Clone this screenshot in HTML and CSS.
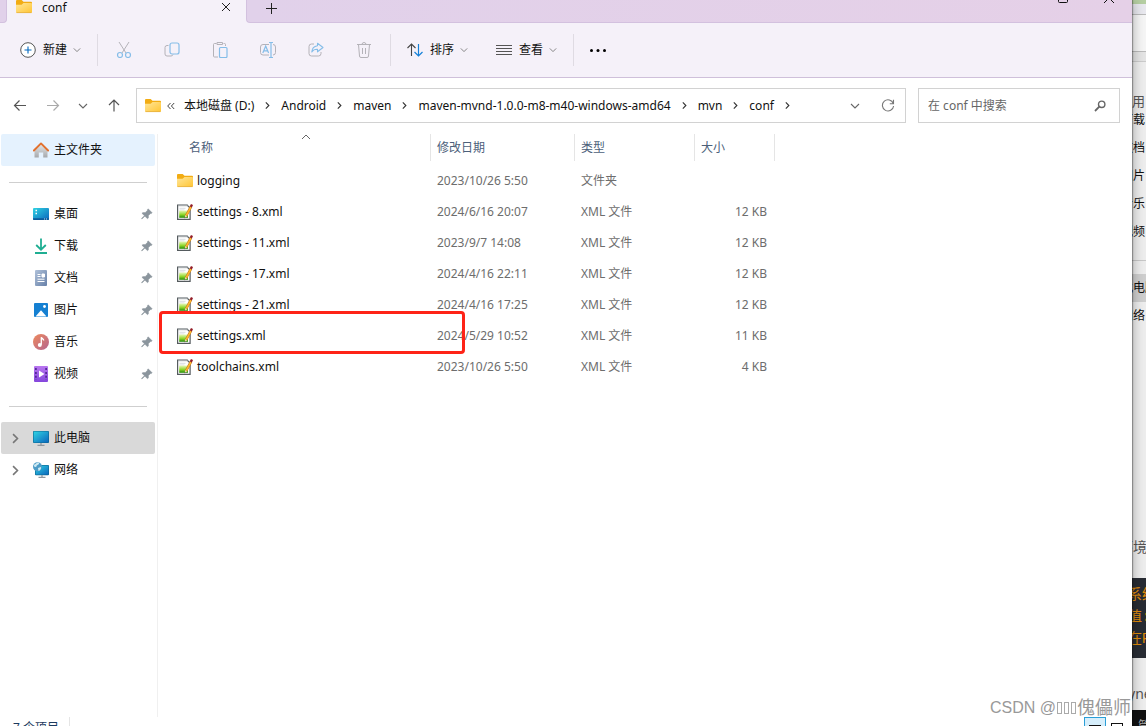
FILE: index.html
```html
<!DOCTYPE html>
<html lang="zh-CN">
<head>
<meta charset="utf-8">
<title>conf</title>
<link rel="stylesheet" href="styles.css">
</head>
<body>
<svg class="defs" aria-hidden="true">
  <defs>
    <linearGradient id="g-folder" x1="0" y1="0" x2="1" y2="1"><stop offset="0" stop-color="#ffe69a"/><stop offset="1" stop-color="#ffc533"/></linearGradient>
    <linearGradient id="g-screen" x1="0" y1="0" x2="1" y2="1"><stop offset="0" stop-color="#2fd3e2"/><stop offset="1" stop-color="#0c66bd"/></linearGradient>
    <linearGradient id="g-music" x1="0" y1="0" x2="1" y2="1"><stop offset="0" stop-color="#ee8a5d"/><stop offset="1" stop-color="#b4648f"/></linearGradient>
    <linearGradient id="g-doc" x1="0" y1="0" x2="1" y2="1"><stop offset="0" stop-color="#b0c1d9"/><stop offset="1" stop-color="#6680a8"/></linearGradient>
    <linearGradient id="g-video" x1="0" y1="0" x2="0" y2="1"><stop offset="0" stop-color="#b976f0"/><stop offset="1" stop-color="#8446dc"/></linearGradient>
    <linearGradient id="g-green" x1="0" y1="0" x2="0" y2="1"><stop offset="0" stop-color="#e9f8b8"/><stop offset=".55" stop-color="#8ed62c"/><stop offset="1" stop-color="#218a06"/></linearGradient>
    <linearGradient id="g-wall" x1="0" y1="0" x2="0" y2="1"><stop offset="0" stop-color="#e8e9ea"/><stop offset="1" stop-color="#a6a9ac"/></linearGradient>
    <symbol id="folder" viewBox="0 0 16 16">
      <path d="M0 2a1 1 0 0 1 1-1h4.700l1.800 1.700H15a1 1 0 0 1 1 1V8H0z" fill="#f2ac13"/>
      <path d="M0 5.700h5.600L7.500 4H15a1 1 0 0 1 1 1V13a1 1 0 0 1-1 1H1a1 1 0 0 1-1-1z" fill="url(#g-folder)"/>
      <path d="M.5 13.600h15" stroke="#e6b040" stroke-width=".8"/>
    </symbol>
    <symbol id="xml" viewBox="0 0 16 16">
      <path d="M.600 1h9.500l3 3v11.300H.600z" fill="#fff" stroke="#555b5e" stroke-width="1.200"/>
      <path d="M2 0v2.400M4 0v2.400M6 0v2.400M8 0v2.400M10 0v2.400" stroke="#a5abae"/>
      <path d="M2.500 4.300h6M2.500 6h5" stroke="#c9cfd2" stroke-width=".7"/>
      <path d="M2.200 6.500h8.800v7.300H2.200z" fill="url(#g-green)"/>
      <path d="M14 2.600 9 12" stroke="#b5701a" stroke-width="2.600"/>
      <path d="M13.900 3 9.300 11.500" stroke="#ffb62e" stroke-width="1.600"/>
      <path d="m8 11.100 2.200 1.200-2.400 2z" fill="#efd5a0"/><path d="m7.800 13.100.9.500-1 .9z" fill="#222"/>
      <path d="m14 0 2 1.100-1.100 2.300-2.200-1.200z" fill="#931d28"/>
    </symbol>
    <symbol id="home" viewBox="0 0 16 16">
      <path d="M1.500 7.500 8 1.500l6.500 6V15.500h-4.300v-5H5.800v5H1.500z" fill="url(#g-wall)"/>
      <path d="M.9 8.500 8 1.400l7.100 7.100" fill="none" stroke="#e2702d" stroke-width="1.900" stroke-linecap="round" stroke-linejoin="round"/>
    </symbol>
    <symbol id="desktop" viewBox="0 0 16 16">
      <rect y="2" width="16" height="12" rx="1" fill="url(#g-screen)"/>
      <path d="M2.500 4.500H4M2.500 7.500H4" stroke="#fff" stroke-width="1.300"/>
      <path d="M0 12.200h16V13a1 1 0 0 1-1 1H1a1 1 0 0 1-1-1z" fill="#0b5a9c"/><path d="M11 13h1m1 0h1" stroke="#fff" stroke-width=".8"/>
    </symbol>
    <symbol id="download" viewBox="0 0 16 16">
      <path d="M8 .5v11M3.200 7 8 11.700 12.800 7M2 15h12" fill="none" stroke="#1fae92" stroke-width="1.800"/>
    </symbol>
    <symbol id="document" viewBox="0 0 16 16">
      <rect x="2" width="12" height="16" rx="1" fill="url(#g-doc)"/>
      <path d="M4.500 4.500h3M4.500 6.500h3M4.500 9.200h7M4.500 11.500h7M9 4h2.500v3H9z" stroke="#fff" fill="#fff" stroke-width="1"/>
    </symbol>
    <symbol id="picture" viewBox="0 0 16 16">
      <rect x="1" y="1" width="14" height="14" rx="1" fill="#1580d2"/>
      <path d="M2.500 14.500 8 8.200l5.500 6.300z" fill="#fff"/><circle cx="11.500" cy="4.500" r="1.400" fill="#fff"/>
    </symbol>
    <symbol id="music" viewBox="0 0 16 16">
      <circle cx="8" cy="8" r="8" fill="url(#g-music)"/>
      <path d="M8.300 10.800V3.300c.5 1.400 2.400 1.500 2.400 3.300" fill="none" stroke="#fff" stroke-width="1.300"/><circle cx="6.800" cy="11" r="2" fill="#fff"/>
    </symbol>
    <symbol id="video" viewBox="0 0 16 16">
      <rect x="1" width="14" height="16" rx="1" fill="url(#g-video)"/>
      <path d="M2.900 2v12M13.100 2v12" stroke="#4d2490" stroke-width="1.600" stroke-dasharray="2 1.900"/>
      <path d="M6 4.500v7L11.500 8z" fill="#fff"/>
    </symbol>
    <symbol id="computer" viewBox="0 0 16 16">
      <rect y="1" width="16" height="12" rx="1" fill="#0b6791"/><rect x=".6" y="1.600" width="14.800" height="10.800" rx=".5" fill="url(#g-screen)"/>
      <path d="M8 13v2M4.500 15.300h7" stroke="#8f979e" stroke-width="1.300"/>
    </symbol>
    <symbol id="network" viewBox="0 0 16 16">
      <rect x="2" y="3" width="14" height="10.200" rx="1" fill="#0b6791"/><rect x="2.600" y="3.600" width="12.800" height="9" fill="url(#g-screen)"/>
      <path d="M9 13v2M5.500 15.400h7" stroke="#8f979e" stroke-width="1.300"/>
      <circle cx="4.500" cy="4.800" r="4.500" fill="#4e9cc7"/><path d="M1 2.800c2-.4 2-2 4-2.300 2 .5 1 2-.5 2.400s-.5 2-2 2S1 4.500 1 2.800zM5 6l3-1c.5 1.800-1 3.700-2.500 4z" fill="#cfeaf2"/>
    </symbol>
    <symbol id="pin" viewBox="0 0 12 12">
      <path d="M7.200.8 11.200 4.800 10.400 5.600 9.700 5.400 7.500 7.600 7.400 10 6.500 10.800 3.900 8.200 1.300 10.700.6 10.900.8 10.100 3.400 7.700.9 5.300 1.900 4.500 4.300 4.500 6.500 2.300 6.400 1.600z" fill="#8b959d" stroke="#8b959d" stroke-width=".4"/>
    </symbol>
    <symbol id="right" viewBox="0 0 8 8"><path d="m2.500 1.300 2.700 2.700-2.700 2.700" fill="none" stroke="currentColor"/></symbol>
    <symbol id="down" viewBox="0 0 10 10"><path d="m1 3 4 4 4-4" fill="none" stroke="currentColor" stroke-width="1.100"/></symbol>
  </defs>
</svg>

<div class="screen">
  <main class="window">
    <header class="tabs">
      <div class="tab-prev"></div>
      <div class="tab">
        <svg class="icon"><use href="#folder"/></svg>
        <span class="tab-name">conf</span>
        <button class="tab-close" aria-label="关闭标签页"><svg viewBox="0 0 10 10" width="10" height="10"><path d="m1 1 8 8M9 1 1 9" stroke="#222" fill="none"/></svg></button>
      </div>
      <div class="tab-rest">
        <button aria-label="新建标签页"><svg viewBox="0 0 12 12" width="12" height="12"><path d="M6.500 1v11M1 6.500h11" stroke="#222" fill="none"/></svg></button>
        <div class="caption">
          <button aria-label="最大化"><svg viewBox="0 0 10 10" width="10" height="10"><rect x=".5" y=".5" width="9" height="9" rx="1" fill="none" stroke="#111"/></svg></button>
          <button aria-label="关闭"><svg viewBox="0 0 10 10" width="10" height="10"><path d="m0 0 10 10M10 0 0 10" stroke="#111" fill="none"/></svg></button>
        </div>
      </div>
    </header>

    <div class="toolbar">
      <button class="cmd"><svg class="icon" viewBox="0 0 16 16"><circle cx="8" cy="8" r="7.300" fill="#fff" stroke="#555"/><path d="M8 4.500v7M4.500 8h7" stroke="#0067c0" stroke-width="1.100"/></svg>新建<svg class="chev"><use href="#down"/></svg></button>
      <i class="sep"></i>
      <div class="tools">
        <button aria-label="剪切"><svg class="icon" viewBox="0 0 16 16" fill="none"><path d="M3 0l7 11M13 0 6 11" stroke="#b4b2b8"/><circle cx="4" cy="13" r="2.500" stroke="#85bde8" stroke-width="1.200"/><circle cx="12" cy="13" r="2.500" stroke="#85bde8" stroke-width="1.200"/></svg></button>
        <button aria-label="复制"><svg class="icon" viewBox="0 0 16 16" fill="none"><path d="M4.500 3.500H3a2 2 0 0 0-2 2V12a2 2 0 0 0 2 2h4a2 2 0 0 0 2-1.500" stroke="#b4b2b8"/><rect x="6" y="1" width="9" height="11" rx="2" stroke="#85bde8" stroke-width="1.200"/></svg></button>
        <button aria-label="粘贴"><svg class="icon" viewBox="0 0 16 16" fill="none"><path d="M4.500 1.500H2.500a1 1 0 0 0-1 1V14a1 1 0 0 0 1 1H6M11.500 1.500h1a1 1 0 0 1 1 1V4M5 .5h5.500v2H5z" stroke="#b4b2b8"/><rect x="7.500" y="5.500" width="7.500" height="10" rx="1" stroke="#85bde8" stroke-width="1.200"/></svg></button>
        <button aria-label="重命名"><svg class="icon" viewBox="0 0 16 16" fill="none"><path d="M9 2.500H3a2.500 2.500 0 0 0-2.500 2.500v5.500A2.500 2.500 0 0 0 3 13h6M13 2.500a2.500 2.500 0 0 1 2.500 2.500v5.500A2.500 2.500 0 0 1 13 13" stroke="#b4b2b8"/><path d="M11 .5v15M9 .5h4M9 15.500h4M2.800 11l2.900-7 2.900 7M3.800 8.800h3.800" stroke="#85bde8" stroke-width="1.200"/></svg></button>
        <button aria-label="共享"><svg class="icon" viewBox="0 0 16 16" fill="none"><path d="M6 2H3.500A2.500 2.500 0 0 0 1 4.500v7A2.500 2.500 0 0 0 3.500 14h7a2.500 2.500 0 0 0 2.500-2.500V10" stroke="#b4b2b8"/><path d="M9.500 1.200 15 5.500l-5.500 4.300V7.300C6.500 7.200 5 8 3.800 10c.2-3.500 2.200-5.800 5.700-6.300z" stroke="#85bde8" stroke-linejoin="round" stroke-width="1.100"/></svg></button>
        <button aria-label="删除"><svg class="icon" viewBox="0 0 16 16" fill="none"><path d="M1 2.500h14M2.500 2.500l1 11.500a1.500 1.500 0 0 0 1.500 1.500h6a1.500 1.500 0 0 0 1.500-1.500l1-11.500M6 2.500a2 2 0 0 1 4 0M6.500 6v6M9.500 6v6" stroke="#b4b2b8"/></svg></button>
      </div>
      <i class="sep"></i>
      <button class="cmd"><svg class="icon" viewBox="0 0 16 16" fill="none"><path d="M4.500 14V2M.5 6l4-4 4 4" stroke="#444" stroke-width="1.100"/><path d="M11.500 2v12M7.500 10l4 4 4-4" stroke="#1480d8" stroke-width="1.200"/></svg>排序<svg class="chev"><use href="#down"/></svg></button>
      <button class="cmd view"><svg class="icon" viewBox="0 0 16 16"><path d="M0 3.500h16M0 6.500h16M0 9.500h16M0 12.500h16" stroke="#555"/></svg>查看<svg class="chev"><use href="#down"/></svg></button>
      <i class="sep"></i>
      <button class="more" aria-label="更多"><svg class="icon" viewBox="0 0 16 16"><circle cx="1.500" cy="8.500" r="1.500"/><circle cx="8" cy="8.500" r="1.500"/><circle cx="14.500" cy="8.500" r="1.500"/></svg></button>
    </div>

    <div class="nav">
      <div class="nav-buttons">
        <button aria-label="后退"><svg viewBox="0 0 14 14" width="14" height="14"><path d="M13 6.500H1.500M6.500 1.500l-5 5 5 5" fill="none" stroke="#555" stroke-width="1.200"/></svg></button>
        <button aria-label="前进"><svg viewBox="0 0 14 14" width="14" height="14"><path d="M1 6.500h11.500M7.500 1.500l5 5-5 5" fill="none" stroke="#aaa" stroke-width="1.200"/></svg></button>
        <button aria-label="最近"><svg class="chev"><use href="#down"/></svg></button>
        <button aria-label="向上"><svg viewBox="0 0 14 14" width="14" height="14"><path d="M7 12.500V1M2 6l5-5 5 5" fill="none" stroke="#555" stroke-width="1.200"/></svg></button>
      </div>
      <div class="address">
        <svg class="icon"><use href="#folder"/></svg>
        <svg class="back-more" viewBox="0 0 8 8"><path d="M3.500 1 .7 4l2.800 3M7.200 1 4.400 4l2.800 3" fill="none" stroke="#444"/></svg>
        <ol class="crumbs">
          <li>本地磁盘 (D:)<svg><use href="#right"/></svg></li>
          <li>Android<svg><use href="#right"/></svg></li>
          <li>maven<svg><use href="#right"/></svg></li>
          <li>maven-mvnd-1.0.0-m8-m40-windows-amd64<svg><use href="#right"/></svg></li>
          <li>mvn<svg><use href="#right"/></svg></li>
          <li>conf<svg><use href="#right"/></svg></li>
        </ol>
        <button aria-label="历史"><svg class="chev"><use href="#down"/></svg></button>
        <button class="refresh" aria-label="刷新"><svg viewBox="0 0 14 14" width="14" height="14"><path d="M12.300 4.500A5.600 5.600 0 1 0 12.600 7M12.500.8v4H8.800" fill="none" stroke="#777" stroke-width="1.100"/></svg></button>
      </div>
      <label class="search">
        <input type="text" placeholder="在 conf 中搜索" aria-label="在 conf 中搜索">
        <svg viewBox="0 0 12 12" width="12" height="12"><circle cx="7.700" cy="4.300" r="3.200" fill="none" stroke="#666" stroke-width="1.400"/><path d="M5.300 6.700 1 11" stroke="#666" stroke-width="1.800"/></svg>
      </label>
    </div>

    <div class="content">
      <nav class="sidebar">
        <a class="place home" href="#"><i class="expand"></i><svg class="icon"><use href="#home"/></svg><span>主文件夹</span></a>
        <hr>
        <a class="place" href="#"><i class="expand"></i><svg class="icon"><use href="#desktop"/></svg><span>桌面</span><svg class="pin"><use href="#pin"/></svg></a>
        <a class="place" href="#"><i class="expand"></i><svg class="icon"><use href="#download"/></svg><span>下载</span><svg class="pin"><use href="#pin"/></svg></a>
        <a class="place" href="#"><i class="expand"></i><svg class="icon"><use href="#document"/></svg><span>文档</span><svg class="pin"><use href="#pin"/></svg></a>
        <a class="place" href="#"><i class="expand"></i><svg class="icon"><use href="#picture"/></svg><span>图片</span><svg class="pin"><use href="#pin"/></svg></a>
        <a class="place" href="#"><i class="expand"></i><svg class="icon"><use href="#music"/></svg><span>音乐</span><svg class="pin"><use href="#pin"/></svg></a>
        <a class="place" href="#"><i class="expand"></i><svg class="icon"><use href="#video"/></svg><span>视频</span><svg class="pin"><use href="#pin"/></svg></a>
        <hr>
        <a class="place current" href="#"><i class="expand"><svg><use href="#right"/></svg></i><svg class="icon"><use href="#computer"/></svg><span>此电脑</span></a>
        <a class="place" href="#"><i class="expand"><svg><use href="#right"/></svg></i><svg class="icon"><use href="#network"/></svg><span>网络</span></a>
      </nav>

      <section class="files">
        <table>
          <thead>
            <tr>
              <th class="name"><div>名称<svg class="sort" viewBox="0 0 10 6"><path d="m1 5 4-4 4 4" fill="none" stroke="#666"/></svg></div></th>
              <th class="date"><div>修改日期</div></th>
              <th class="type"><div>类型</div></th>
              <th class="size"><div>大小</div></th>
            </tr>
          </thead>
          <tbody>
            <tr><td><svg class="icon"><use href="#folder"/></svg><span>logging</span></td><td>2023/10/26 5:50</td><td>文件夹</td><td></td></tr>
            <tr><td><svg class="icon"><use href="#xml"/></svg><span>settings - 8.xml</span></td><td>2024/6/16 20:07</td><td>XML 文件</td><td>12 KB</td></tr>
            <tr><td><svg class="icon"><use href="#xml"/></svg><span>settings - 11.xml</span></td><td>2023/9/7 14:08</td><td>XML 文件</td><td>12 KB</td></tr>
            <tr><td><svg class="icon"><use href="#xml"/></svg><span>settings - 17.xml</span></td><td>2024/4/16 22:11</td><td>XML 文件</td><td>12 KB</td></tr>
            <tr><td><svg class="icon"><use href="#xml"/></svg><span>settings - 21.xml</span></td><td>2024/4/16 17:25</td><td>XML 文件</td><td>12 KB</td></tr>
            <tr><td><svg class="icon"><use href="#xml"/></svg><span>settings.xml</span></td><td>2024/5/29 10:52</td><td>XML 文件</td><td>11 KB</td></tr>
            <tr><td><svg class="icon"><use href="#xml"/></svg><span>toolchains.xml</span></td><td>2023/10/26 5:50</td><td>XML 文件</td><td>4 KB</td></tr>
          </tbody>
        </table>
        <div class="highlight"></div>
      </section>
    </div>

    <footer class="status">
      <span>7 个项目</span>
      <div class="views">
        <button class="on" aria-label="详细信息"><svg viewBox="0 0 12 12" width="12" height="12"><path d="M0 3.500h12M0 6.500h12" stroke="#111"/></svg></button>
        <button aria-label="大图标"><svg viewBox="0 0 12 12" width="12" height="12"><rect x=".5" y="1.500" width="11" height="9" fill="#fff" stroke="#111"/></svg></button>
      </div>
    </footer>
  </main>

  <aside class="behind">
    <div class="b-top"></div>
    <div class="b-bar"></div>
    <div class="b-line"></div>
    <div class="b-label"><span>使用</span></div>
    <ul class="b-list">
      <li>下载</li><li>文档</li><li>图片</li><li>音乐</li><li>视频</li>
    </ul>
    <ul class="b-list b-devices">
      <li class="b-current">此电脑</li><li>网络</li>
    </ul>
    <div class="b-word"><span>环境</span></div>
    <pre class="b-code">系统
值:
在P</pre>
    <div class="b-word b-last"><span>yne</span></div>
    <div class="b-black"><span>管</span></div>
  </aside>
  <div class="watermark">CSDN @<i></i><i></i><i></i><span>傀儡师</span></div>
</div>
</body>
</html>
```
FILE: styles.css
```css
* { box-sizing: border-box; }
body { margin: 0; font: 12px/16px "Noto Sans", "Noto Sans CJK SC", sans-serif; color: #111; }
button { border: 0; padding: 0; background: none; font: inherit; color: inherit; display: flex; align-items: center; justify-content: center; }
svg { display: block; flex: none; }
a { color: inherit; text-decoration: none; }
ul, ol { list-style: none; margin: 0; padding: 0; }
.defs { position: absolute; width: 0; height: 0; }
.icon { width: 16px; height: 16px; }
.chev { width: 10px; height: 10px; color: #666; }

.screen { position: relative; display: flex; height: 100vh; overflow: hidden; }
.window { flex: 1; min-width: 0; display: flex; flex-direction: column; background: #fff; box-shadow: 0 0 1px 1px rgba(0, 0, 0, .3), 0 0 12px rgba(0, 0, 0, .35); position: relative; z-index: 1; }

.tabs { display: flex; height: 23px; flex: none; background: #f5f1f9; }
.tab-prev { width: 7px; background: #e1d1ea; border: solid #d3c1df; border-width: 0 1px 1px 0; border-radius: 0 0 4px 0; }
.tab { width: 239px; display: flex; align-items: flex-start; padding: 0 15px 0 9px; }
.tab .icon { margin-top: -1px; }
.tab-name { flex: 1; padding-left: 10px; }
.tab-close { margin-top: 2px; }
.tab-rest { flex: 1; display: flex; justify-content: space-between; align-items: flex-start; padding: 2px 18px 0; background: linear-gradient(90deg, #e1d1ea, #e5d0e7); border: solid #d3c1df; border-width: 0 0 1px 1px; border-radius: 0 0 0 4px; }
.caption { display: flex; gap: 36px; margin-top: -9px; }

.toolbar { display: flex; align-items: center; height: 55px; flex: none; padding-left: 20px; background: #f5f1f9; border-bottom: 1px solid #cfc0da; }
.cmd { gap: 7px; }
.cmd .chev { width: 8px; height: 8px; color: #777; margin-left: -1px; }
.sep { width: 1px; height: 32px; background: #dfdbe3; margin: 0 16px; }
.tools { display: flex; gap: 32px; padding: 0 2px; }
.view { margin-left: 28px; }

.nav { display: flex; gap: 12px; padding: 10px 12px 11px 13px; flex: none; }
.nav-buttons { display: flex; align-items: center; justify-content: space-between; width: 111px; padding-right: 3px; }
.address { flex: 1; display: flex; align-items: center; height: 35px; border: 1px solid #d2d2d2; padding: 0 10px 0 8px; }
.back-more { width: 8px; height: 8px; margin: 0 9px 0 6px; }
.crumbs { flex: 1; display: flex; }
.crumbs li { display: flex; align-items: center; }
.crumbs svg { width: 9px; height: 9px; margin: 0 9px; color: #333; }
.refresh { margin-left: 21px; }
.search { width: 202px; display: flex; align-items: center; border: 1px solid #d2d2d2; padding: 0 13px 0 9px; }
.search input { flex: 1; min-width: 0; border: 0; padding: 0; background: none; font: inherit; outline: 0; }
.search input::placeholder { color: #666; opacity: 1; }

.content { flex: 1; min-height: 0; display: flex; }
.sidebar { width: 158px; padding: 0 2px 0 1px; border-right: 1px solid #f0f0f0; }
.place { display: flex; align-items: center; height: 32px; padding-right: 2px; border-radius: 2px; }
.place.home { background: #e5f2fe; }
.place.current { background: #d9d9d9; }
.place span { flex: 1; padding-left: 5px; }
.expand { width: 32px; color: #777; padding-left: 8px; }
.expand svg { width: 13px; height: 13px; }
.pin { width: 12px; height: 12px; }
.sidebar hr { border: 0; height: 1px; margin: 16px 8px 15px; background: #cfcfcf; }

.files { flex: 1; position: relative; }
table { border-collapse: collapse; table-layout: fixed; width: 617px; }
th, td { padding: 0; height: 31px; text-align: left; font-weight: 400; }
th { color: #4c607a; vertical-align: top; }
th div { position: relative; height: 27px; line-height: 27px; padding-left: 6px; border-right: 1px solid #e5e5e5; }
.name { width: 273px; }
.name div { padding-left: 31px; }
.date { width: 144px; }
.type { width: 120px; }
.size { width: 80px; }
.sort { position: absolute; left: 143px; top: 0; width: 10px; height: 6px; }
td { color: #6d6d6d; padding-left: 6px; }
td:first-child { display: flex; align-items: center; gap: 4px; padding-left: 19px; color: #111; }
td:last-child { text-align: right; padding-right: 8px; }
.highlight { position: absolute; left: 1px; top: 177px; width: 306px; height: 43px; border: 3px solid #fe2317; border-radius: 4px; }

.status { flex: none; height: 9px; overflow: hidden; display: flex; justify-content: space-between; align-items: flex-start; padding: 0 4px 0 13px; color: #1d3b5e; }
.status span { padding: 3px 10px 0 0; border-right: 1px solid #e5e5e5; }
.views { display: flex; }
.views button { width: 22px; height: 22px; }
.views .on { background: #d6eefb; border: 1px solid #2a9fd8; }

.behind { width: 14px; flex: none; overflow: hidden; background: #eee; display: flex; flex-direction: column; }
.behind > * { flex: none; }
.b-top { height: 15px; background: linear-gradient(#b6cfa3 4px, #e9e9ef 4px); border-bottom: 1px solid #bbb; }
.b-bar { height: 37px; background: #f6f6f6; border-bottom: 1px solid #bbb; }
.b-line { height: 10px; background: #e5e5e5; border-bottom: 1px solid #ccc; }
.b-label { height: 44px; padding-top: 31px; font-size: 13px; color: #555; }
.b-label span, .b-word span { display: block; width: 32px; margin-left: -13px; }
.b-list li { height: 28px; line-height: 28px; width: 40px; margin-left: -11px; white-space: nowrap; }
.b-list { height: 155px; border-bottom: 1px solid #c8c8c8; }
.b-devices { height: 266px; padding-top: 13px; border: 0; }
.b-list .b-current { background: #cfcfcf; }
.b-word { height: 51px; padding-top: 12px; font-size: 14px; color: #555; }
.b-code { height: 80px; margin: 0 0 0 -4px; padding: 6px 0; width: 40px; background: #282c34; color: #e08c0c; font: 14px/22px "Liberation Mono", "Noto Sans CJK SC", monospace; }
.b-last { height: 52px; padding-top: 28px; }
.b-last span { margin-left: -4px; }
.b-black { height: 20px; background: #111; color: #aaa; font-size: 14px; padding: 8px 0 0 6px; }

.watermark { position: absolute; z-index: 2; right: 15px; bottom: 6px; display: flex; align-items: center; font: 16px/24px "Liberation Sans", "Noto Sans CJK SC", sans-serif; color: #999; }
.watermark i { width: 5px; height: 12px; margin: 0 1px; border: 1px solid #aaa; }
.watermark span { font-size: 18px; }
```
